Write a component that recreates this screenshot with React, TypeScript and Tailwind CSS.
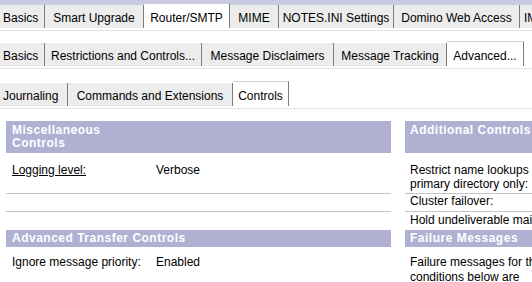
import type { ReactNode } from 'react';

type TabDef = { label: string; w: string; active?: boolean; align?: string };

const row1: TabDef[] = [
  { label: 'Basics', w: 'w-[45px]', align: 'justify-start pl-[3px]' },
  { label: 'Smart Upgrade', w: 'w-[99px]' },
  { label: 'Router/SMTP', w: 'w-[86px]', active: true },
  { label: 'MIME', w: 'w-[49px]' },
  { label: 'NOTES.INI Settings', w: 'w-[115px]' },
  { label: 'Domino Web Access', w: 'w-[126px]' },
  { label: 'IMAP', w: 'w-[60px]', align: 'justify-start pl-[4px]' },
];

const row2: TabDef[] = [
  { label: 'Basics', w: 'w-[45px]', align: 'justify-start pl-[3px]' },
  { label: 'Restrictions and Controls...', w: 'w-[157px]' },
  { label: 'Message Disclaimers', w: 'w-[132px]' },
  { label: 'Message Tracking', w: 'w-[113px]' },
  { label: 'Advanced...', w: 'w-[77px]', active: true },
];

const row3: TabDef[] = [
  { label: 'Journaling', w: 'w-[68px]', align: 'justify-start pl-[3px]' },
  { label: 'Commands and Extensions', w: 'w-[165px]' },
  { label: 'Controls', w: 'w-[56px]', active: true },
];

function Tab({ tab }: { tab: TabDef }) {
  return (
    <div
      className={
        'flex shrink-0 items-end whitespace-nowrap pb-[3px] leading-[14px] border-r border-r-[#7c7c7c] ' +
        tab.w + ' ' + (tab.align ?? 'justify-center') + ' ' +
        (tab.active ? 'h-[25px] bg-white border-t border-t-[#d2d2d2]' : 'h-[23px] bg-[#ececec]')
      }
    >
      {tab.label}
    </div>
  );
}

function TabRow({ tabs, className }: { tabs: TabDef[]; className: string }) {
  return (
    <>
      <div className={'flex items-end overflow-hidden ' + className}>
        {tabs.map((t) => <Tab key={t.label} tab={t} />)}
      </div>
      <div className="mt-[2px] h-px bg-[#e2e2e2]" />
    </>
  );
}

function Header({ children, className }: { children: ReactNode; className: string }) {
  return (
    <div className={'bg-[#b0b0d3] text-white font-bold text-[12px] tracking-[0.5px] leading-[13px] whitespace-nowrap overflow-hidden ' + className}>
      {children}
    </div>
  );
}

export default function App() {
  return (
    <div className="w-[532px] h-[282px] overflow-hidden bg-white text-black text-[12px] font-['Liberation_Sans',Arial,sans-serif]">
      {/* tab strips */}
      <TabRow tabs={row1} className="h-[28px] bg-[linear-gradient(to_bottom,#c9cce0_0,#c9cce0_5px,#ffffff_5px)]" />
      <TabRow tabs={row2} className="h-[35px]" />
      <TabRow tabs={row3} className="h-[37px]" />

      {/* form body */}
      <div className="mt-[12px] ml-[6px] grid grid-cols-[385px_260px] gap-x-[14px] whitespace-nowrap">
        <Header className="h-[32px] pt-[3px] pl-[6px]">Miscellaneous<br />Controls</Header>
        <Header className="h-[32px] pt-[3px] pl-[5px]">Additional Controls</Header>

        <div className="flex h-[41px] pt-[10px] pl-[6px] leading-[14px] border-b border-[#c4c4c4]">
          <span className="w-[144px] underline underline-offset-[1px]">Logging level:</span>
          <span>Verbose</span>
        </div>
        <div className="h-[41px] pt-[10px] pl-[5px] leading-[14px] border-b border-[#c4c4c4]">
          Restrict name lookups<br />primary directory only:
        </div>

        <div className="h-[18px] border-b border-[#c4c4c4]" />
        <div className="h-[18px] pl-[5px] leading-[14px] border-b border-[#c4c4c4]">Cluster failover:</div>

        <div className="h-[18px]" />
        <div className="h-[18px] pt-[1px] pl-[5px] leading-[14px]">Hold undeliverable mail:</div>

        <Header className="h-[17px] pt-[2px] pl-[6px]">Advanced Transfer Controls</Header>
        <Header className="h-[17px] pt-[2px] pl-[5px]">Failure Messages</Header>

        <div className="flex pt-[8px] pl-[6px] leading-[14px]">
          <span className="w-[144px]">Ignore message priority:</span>
          <span>Enabled</span>
        </div>
        <div className="pt-[8px] pl-[5px] leading-[15px]">
          Failure messages for the<br />conditions below are
        </div>
      </div>
    </div>
  );
}
